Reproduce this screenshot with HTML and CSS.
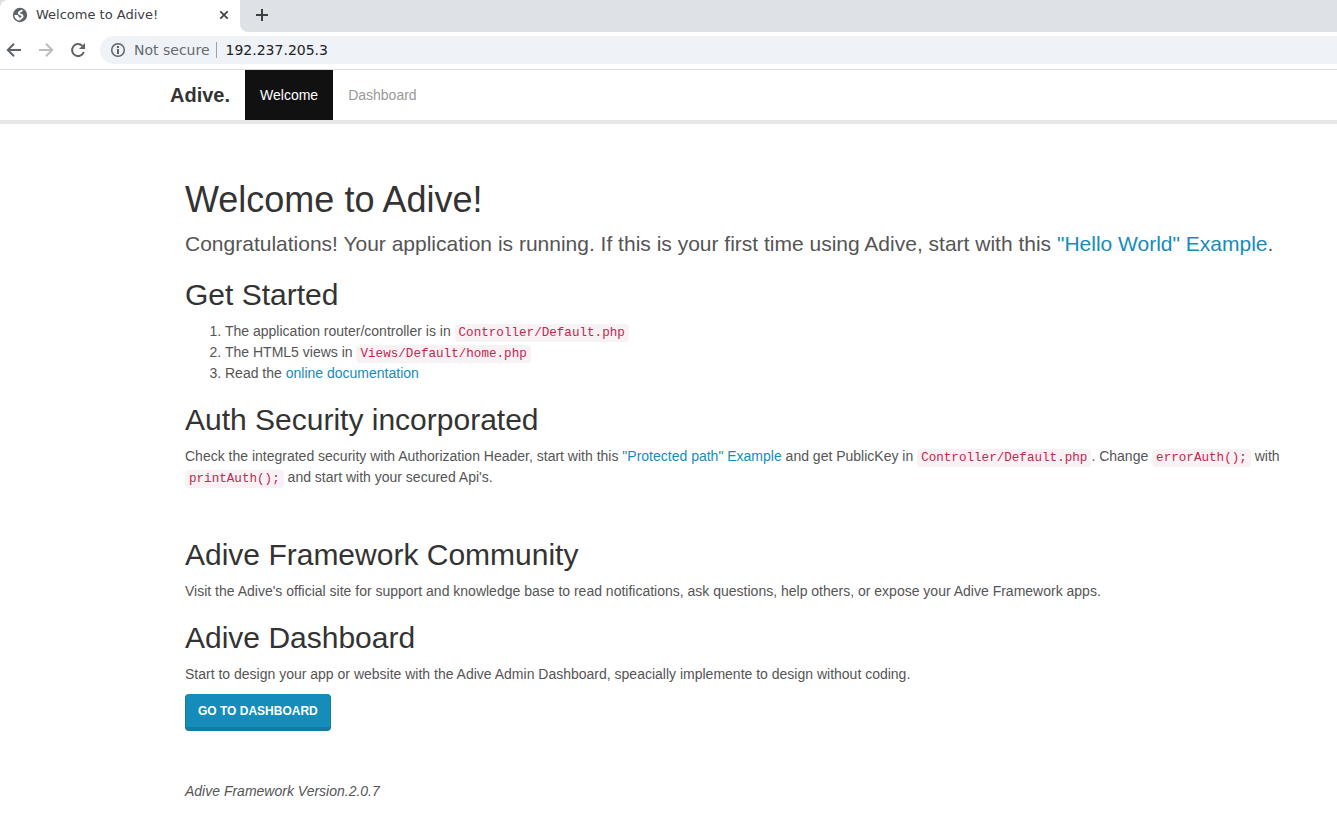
FILE: index.html
```html
<!DOCTYPE html>
<html lang="en">
<head>
<meta charset="utf-8">
<title>Welcome to Adive!</title>
<link rel="stylesheet" href="styles.css">
</head>
<body>
<div class="browser">
  <div class="tabstrip">
    <div class="tab">
      <svg width="16" height="16" viewBox="0 0 16 16" aria-hidden="true">
        <circle cx="8" cy="8" r="7.2" fill="#5f6368"/>
        <path d="M10.2 3.2 C9.6 4.6 6.6 4.2 6.7 6.2 C6.9 8 10.6 6.9 10.6 9.2 C10.5 11.2 8.2 10.8 7.6 13" fill="none" stroke="#fff" stroke-width="1.9"/>
        <path d="M2.4 8 H5.2 C6.6 8.2 6 9.8 7.6 10 V13.6 C4.6 13.4 2.4 11 2.4 8Z" fill="#fff"/>
      </svg>
      <span class="tab-title">Welcome to Adive!</span>
      <button class="icon-button" type="button" aria-label="Close tab">
        <svg width="16" height="16" viewBox="0 0 16 16"><path d="M4.3 4.3 L11.7 11.7 M11.7 4.3 L4.3 11.7" stroke="#3c4043" stroke-width="1.7"/></svg>
      </button>
    </div>
    <div class="strip-rest">
      <button class="icon-button" type="button" aria-label="New tab">
        <svg width="16" height="16" viewBox="0 0 16 16"><path d="M8 2 V14 M2 8 H14" stroke="#3c4043" stroke-width="2"/></svg>
      </button>
    </div>
  </div>
  <div class="toolbar">
    <button class="icon-button" type="button" aria-label="Back">
      <svg width="20" height="20" viewBox="0 0 20 20"><path d="M17 10 H4.5 M10 3.7 L3.8 10 L10 16.3" fill="none" stroke="#5f6368" stroke-width="2"/></svg>
    </button>
    <button class="icon-button" type="button" aria-label="Forward" disabled>
      <svg width="20" height="20" viewBox="0 0 20 20"><path d="M3 10 H15.5 M10 3.7 L16.2 10 L10 16.3" fill="none" stroke="#bbbdc0" stroke-width="2"/></svg>
    </button>
    <button class="icon-button" type="button" aria-label="Reload">
      <svg width="20" height="20" viewBox="0 0 20 20"><path d="M15.8 12 A6 6 0 1 1 14.4 5.9" fill="none" stroke="#5f6368" stroke-width="2"/><path d="M17 3 V9 H11Z" fill="#5f6368"/></svg>
    </button>
    <div class="omnibox">
      <svg width="16" height="16" viewBox="0 0 16 16" aria-hidden="true"><circle cx="8" cy="8" r="6.3" fill="none" stroke="#5f6368" stroke-width="1.5"/><path d="M7 7 H9 V12 H7Z M7 4 H9 V6 H7Z" fill="#5f6368"/></svg>
      <span class="security">Not secure</span>
      <input class="address" type="text" value="192.237.205.3" aria-label="Address">
    </div>
  </div>
</div>
<header class="navbar">
  <nav class="container nav">
    <a class="brand" href="#">Adive.</a>
    <a class="nav-link active" href="#">Welcome</a>
    <a class="nav-link" href="#">Dashboard</a>
  </nav>
</header>
<main class="container">
  <div class="content">
    <h1>Welcome to Adive!</h1>
    <p class="lead">Congratulations! Your application is running. If this is your first time using Adive, start with this <a href="#">"Hello World" Example</a>.</p>
    <h2>Get Started</h2>
    <ol>
      <li>The application router/controller is in <code>Controller/Default.php</code></li>
      <li>The HTML5 views in <code>Views/Default/home.php</code></li>
      <li>Read the <a href="#">online documentation</a></li>
    </ol>
    <h2>Auth Security incorporated</h2>
    <p>Check the integrated security with Authorization Header, start with this <a href="#">"Protected path" Example</a> and get PublicKey in <code>Controller/Default.php</code>. Change <code>errorAuth();</code> with <code>printAuth();</code> and start with your secured Api's.</p>
    <section class="community">
      <h2>Adive Framework Community</h2>
      <p>Visit the Adive's official site for support and knowledge base to read notifications, ask questions, help others, or expose your Adive Framework apps.</p>
      <h2>Adive Dashboard</h2>
      <p>Start to design your app or website with the Adive Admin Dashboard, speacially implemente to design without coding.</p>
      <a class="btn" href="#">Go to Dashboard</a>
    </section>
    <footer class="version"><em>Adive Framework Version.2.0.7</em></footer>
  </div>
</main>
</body>
</html>
```
FILE: styles.css
```css
* {
  box-sizing: border-box;
}

body {
  margin: 0;
  background: #fff;
  color: #555;
  font: 14px/21px "Liberation Sans", Arial, sans-serif;
}

a {
  color: #158cba;
  text-decoration: none;
}

svg {
  display: block;
}

/* Browser frame */
.browser {
  font-family: "DejaVu Sans", sans-serif;
  border-bottom: 1px solid #d9dadb;
}

.tabstrip {
  display: flex;
  height: 32px;
  background: linear-gradient(90deg, #dee1e6 50%, #fff 50%) 0 0 / 16px 100% no-repeat, #fff;
}

.tab {
  display: flex;
  align-items: center;
  gap: 8px;
  width: 240px;
  padding: 0 8px 2px 12px;
  background: #fff;
  border-radius: 8px 8px 0 0;
}

.tab-title {
  flex: 1;
  padding-bottom: 2px;
  color: #3c4043;
  font-size: 13px;
}

.strip-rest {
  flex: 1;
  display: flex;
  align-items: center;
  padding: 0 14px 2px;
  background: #dee1e6;
  border-radius: 0 0 0 8px;
}

.icon-button {
  padding: 0;
  border: 0;
  background: none;
}

.toolbar {
  display: flex;
  align-items: center;
  gap: 12px;
  padding: 4px 0 5px 4px;
}

.omnibox {
  flex: 1;
  display: flex;
  align-items: center;
  gap: 8px;
  height: 28px;
  padding-left: 10px;
  background: #eff2f7;
  border-radius: 14px 0 0 14px;
  font-size: 14px;
}

.security {
  padding-right: 6px;
  border-right: 1px solid #9aa0a6;
  color: #666a6e;
  line-height: 16px;
}

.address {
  flex: 1;
  min-width: 0;
  padding: 0 0 0 1px;
  border: 0;
  background: none;
  color: #202124;
  font: inherit;
}

/* Page */
.container {
  max-width: 1170px;
  margin: 0 12px 0 155px;
  padding: 0 15px;
}

.navbar {
  border-bottom: 4px solid #e7e7e7;
}

.nav {
  display: flex;
  line-height: 50px;
}

.brand {
  padding-right: 15px;
  color: #333;
  font-size: 20px;
  font-weight: bold;
}

.nav-link {
  padding: 0 15px;
  color: #999;
}

.nav-link.active {
  background: #111;
  color: #fff;
}

.content {
  padding: 56px 15px 20px;
}

h1,
h2 {
  margin: 19px 0 10px;
  color: #333;
  font-weight: normal;
}

h1 {
  margin: 0 0 9px;
  font-size: 36px;
  line-height: 40px;
}

h2 {
  font-size: 30px;
  line-height: 33px;
}

p,
ol {
  margin: 0 0 9px;
}

ol {
  padding-left: 40px;
}

.lead {
  font-size: 21px;
  line-height: 30px;
}

code {
  padding: 2px 4px;
  border-radius: 4px;
  background: #f9f2f4;
  color: #c7254e;
  font-family: "Liberation Mono", monospace;
  font-size: 90%;
  line-height: 1;
}

.community {
  margin-top: 50px;
}

.btn {
  display: inline-block;
  padding: 9px 12px 7px;
  border: 0 solid #127ba3;
  border-width: 0 1px 4px;
  border-radius: 4px;
  background: #158cba;
  color: #fff;
  font-size: 12px;
  font-weight: bold;
  line-height: 17px;
  text-transform: uppercase;
}

.version {
  margin-top: 50px;
}
```
